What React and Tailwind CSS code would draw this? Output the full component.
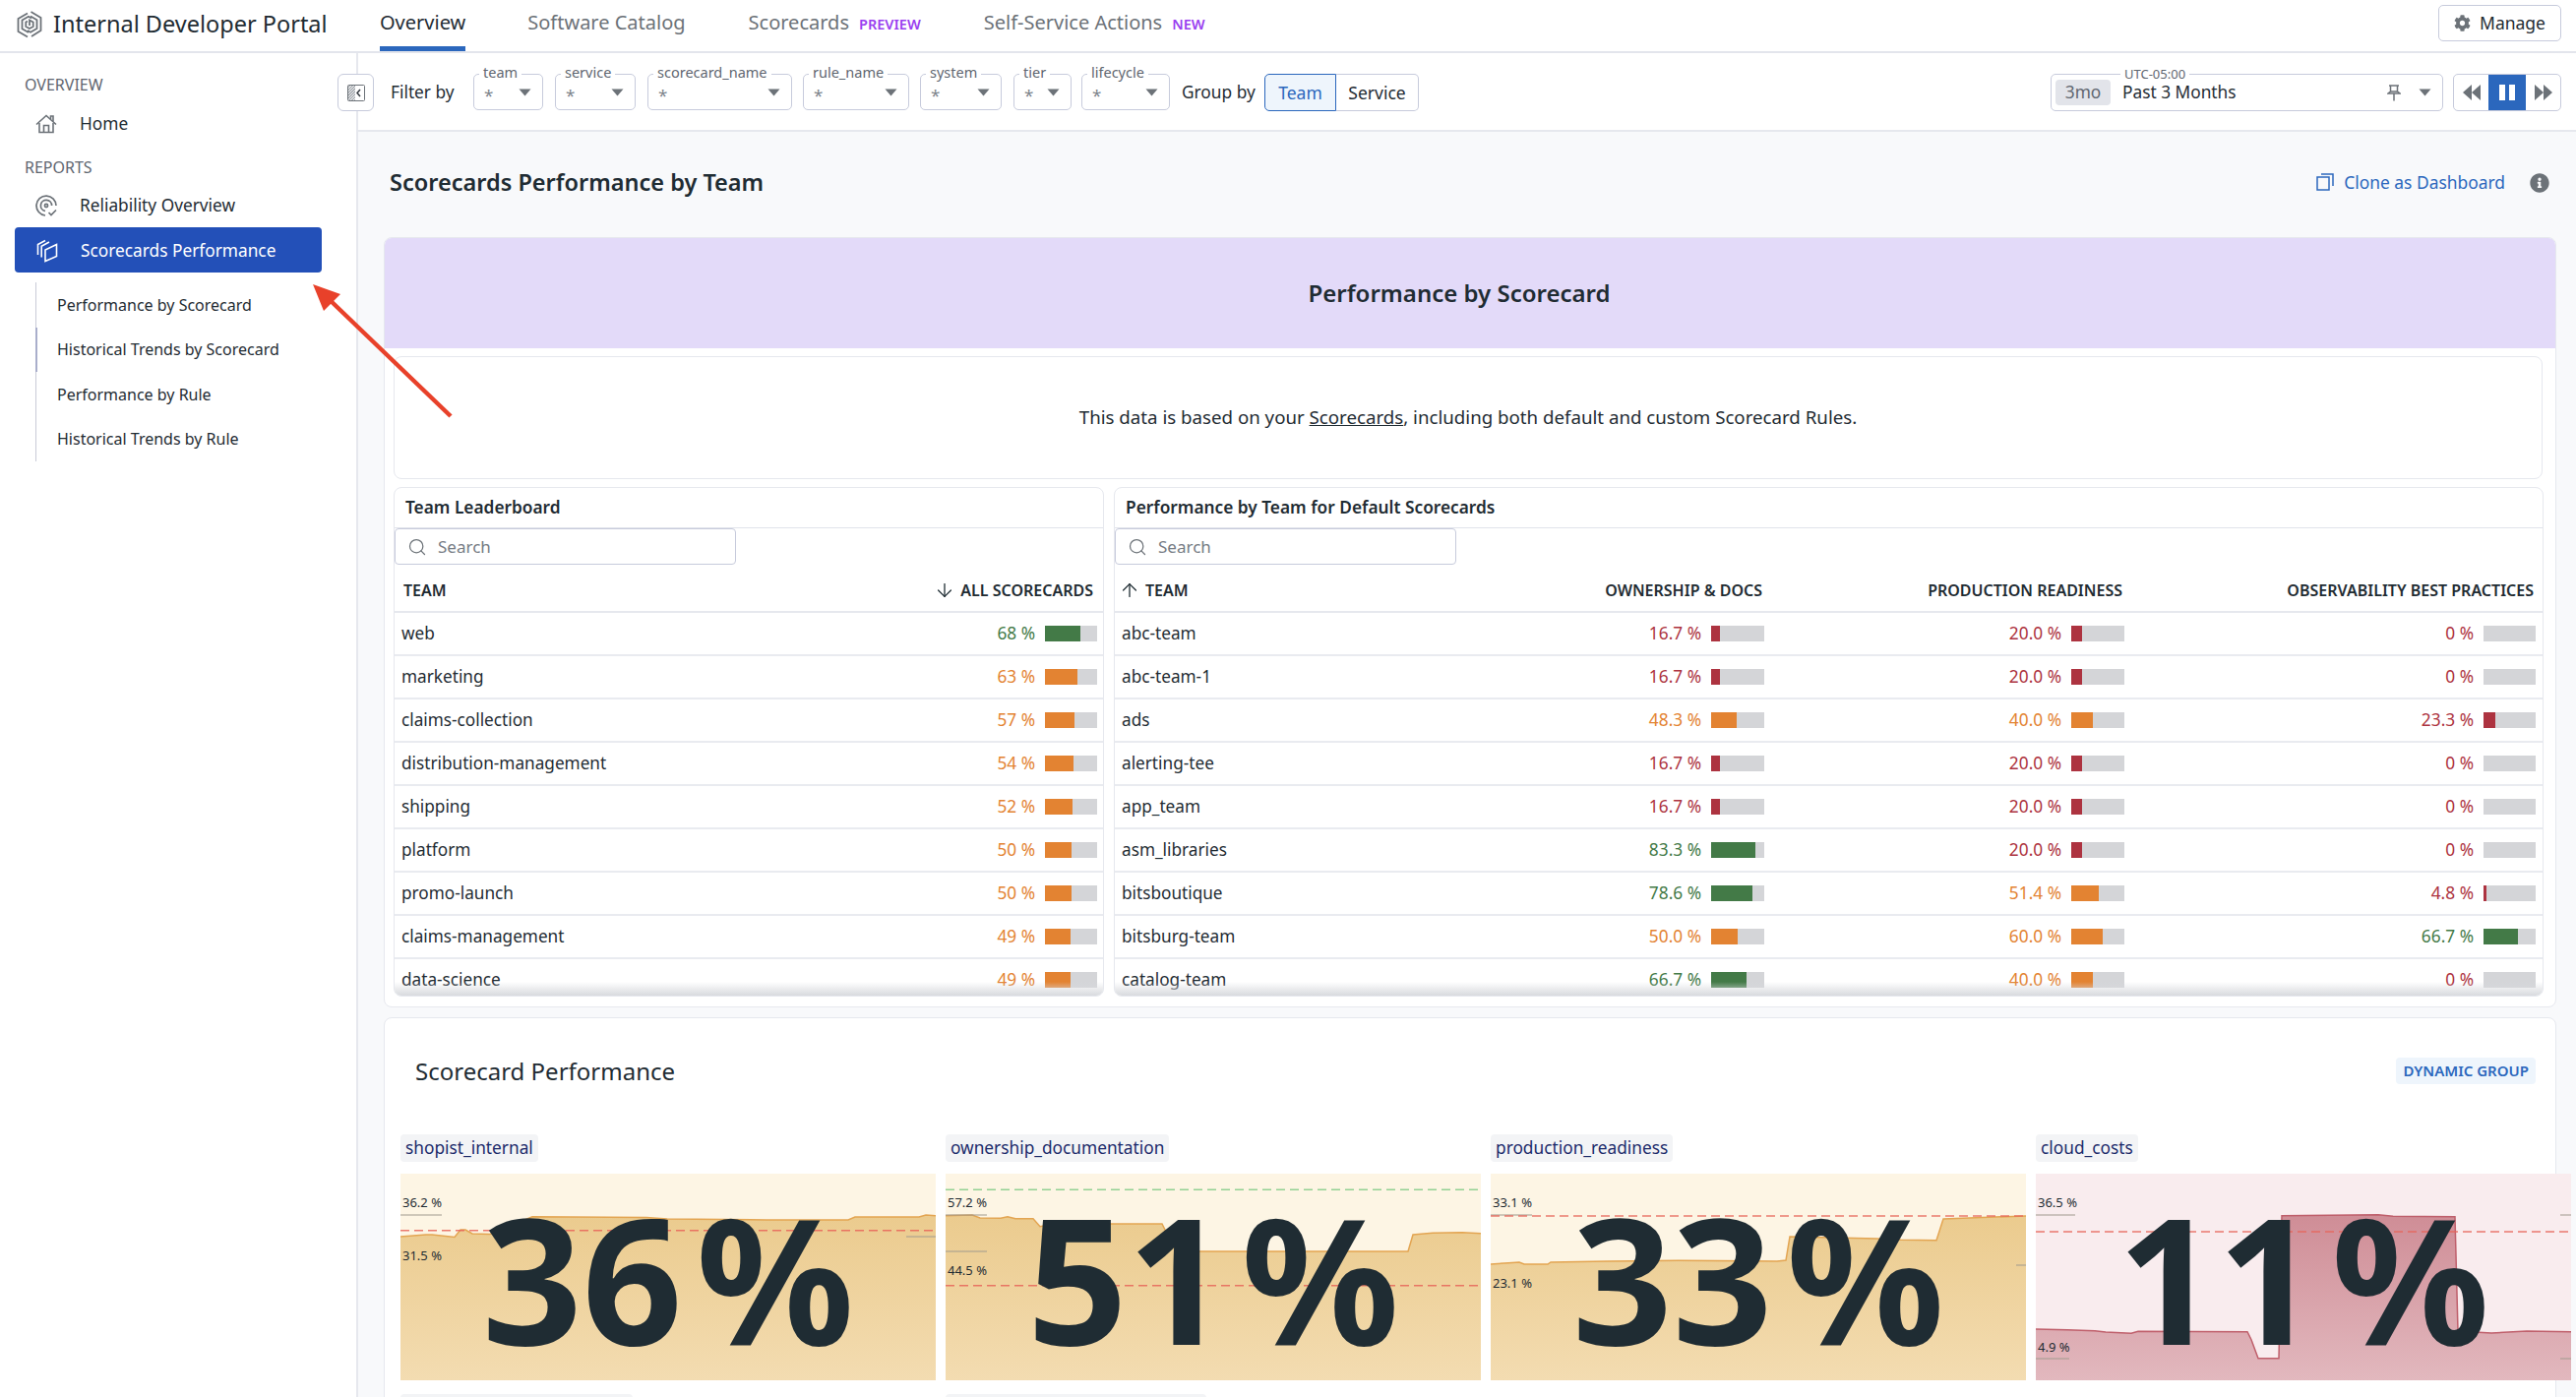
import React from "react";
import { FaCog, FaInfoCircle } from "react-icons/fa";
import { Search, ArrowDown, ArrowUp } from "lucide-react";

const Caret = ({ className = "" }) => (
  <svg width="13" height="8" viewBox="0 0 13 8" className={className}><path d="M0.5 0.5H12.5L6.5 7.5Z" fill="#6c7278" /></svg>
);

const Logo = () => (
  <svg width="26" height="28" viewBox="0 0 26 28" fill="none" stroke="#6c7278" strokeWidth="1.8">
    <path d="M14.5 1 L24.5 7 V20 L15 26" />
    <path d="M11 26.5 L1.5 21 V8 L11 2.5" />
    <path d="M14 5.5 L20.5 9.2 V18 L14 21.7 L11 20" />
    <path d="M12 22 L5.5 18.3 V9.5 L12 5.8 L15 7.5" />
    <path d="M11 10.5 L9.3 11.5 V16 L13 18 L16.7 16 V11.5 L13 9.5 V15" />
  </svg>
);
const HomeIcon = () => (
  <svg width="22" height="20" viewBox="0 0 22 20" fill="none" stroke="#6c7278" strokeWidth="1.6">
    <path d="M1 10.5 L11 1.5 L21 10.5" />
    <path d="M15.5 5 V2 H18 V7.5" />
    <path d="M4 9 V18.5 H18 V9" />
    <path d="M8.5 18.5 V11.5 H13.5 V18.5" />
  </svg>
);
const RelIcon = () => (
  <svg width="23" height="23" viewBox="0 0 23 23" fill="none" stroke="#6c7278" strokeWidth="1.7">
    <path d="M10 21 A10 10 0 1 1 21 11" />
    <path d="M10 16.5 A5.6 5.6 0 1 1 16.6 11" />
    <circle cx="11" cy="11" r="1.6" />
    <path d="M13.5 18 L16 20.5 L21 15.5" />
  </svg>
);
const CardsIcon = () => (
  <svg width="22" height="24" viewBox="0 0 22 24" fill="none" stroke="#ffffff" strokeWidth="1.6">
    <path d="M9 1.5 L1.5 5.5 V16" />
    <path d="M13 3 L5.2 7.2 V18.5" />
    <path d="M20.5 5.5 L9 11 V22.5 L20.5 17.5 Z" />
  </svg>
);
const Collapse = () => (
  <svg width="18" height="17" viewBox="0 0 18 17" fill="none">
    <defs>
      <pattern id="hatch" width="2" height="2" patternUnits="userSpaceOnUse" patternTransform="rotate(45)">
        <rect width="1" height="2" fill="#8a9097" />
      </pattern>
    </defs>
    <rect x="0.5" y="0.5" width="17" height="16" rx="1" fill="#fff" stroke="#6c7278" />
    <rect x="1" y="1" width="7" height="15" fill="url(#hatch)" />
    <path d="M13 5 L10 8.5 L13 12" stroke="#343a40" strokeWidth="1.5" />
  </svg>
);
const Pin = () => (
  <svg width="14" height="17" viewBox="0 0 14 17" fill="none" stroke="#6c7278" strokeWidth="1.5">
    <path d="M2 1 H12 M3.5 1 V7 M10.5 1 V7 M1 9 L3.5 7 H10.5 L13 9 H1 Z M7 9 V16.5" />
  </svg>
);
const Clone = () => (
  <svg width="18" height="18" viewBox="0 0 18 18" fill="none" stroke="#2b67bd" strokeWidth="1.5">
    <rect x="1" y="4" width="12" height="13" />
    <path d="M5 1 H17 V13" />
  </svg>
);

const filters = [
  ["team", "w-[71px]", "mr-[12px]"],
  ["service", "w-[82px]", "mr-[12px]"],
  ["scorecard_name", "w-[147px]", "mr-[11px]"],
  ["rule_name", "w-[108px]", "mr-[11px]"],
  ["system", "w-[83px]", "mr-[12px]"],
  ["tier", "w-[59px]", "mr-[10px]"],
  ["lifecycle", "w-[90px]", "mr-[12px]"],
];

const Filter = ({ name, w, mr }) => (
  <div className={`relative h-[37px] ${w} ${mr} rounded-[5px] border border-[#c7cbdc] bg-white flex items-center justify-between pl-[10px] pr-[11px]`}>
    <span className="absolute left-[5px] top-[-12px] bg-white px-[4px] text-[14.5px] leading-[18px] text-[#5f6670]">{name}</span>
    <span className="text-[17px] leading-[17px] text-[#7d838a] pt-[5px]">*</span>
    <Caret />
  </div>
);

const leaders = [
  ["web", 68], ["marketing", 63], ["claims-collection", 57], ["distribution-management", 54], ["shipping", 52],
  ["platform", 50], ["promo-launch", 50], ["claims-management", 49], ["data-science", 49],
];
const rows = [
  ["abc-team", 16.7, 20, 0], ["abc-team-1", 16.7, 20, 0], ["ads", 48.3, 40, 23.3], ["alerting-tee", 16.7, 20, 0],
  ["app_team", 16.7, 20, 0], ["asm_libraries", 83.3, 20, 0], ["bitsboutique", 78.6, 51.4, 4.8],
  ["bitsburg-team", 50, 60, 66.7], ["catalog-team", 66.7, 40, 0],
];
const tone = (v) => (v >= 66 ? ["text-[#437a47]", "bg-[#437a47]"] : v >= 40 ? ["text-[#e38332]", "bg-[#e38332]"] : ["text-[#ad3340]", "bg-[#ad3340]"]);

const Score = ({ v, label, w = "w-[53px]", gap = "gap-[10px]" }) => {
  const [t, b] = tone(v);
  return (
    <div className={`flex items-center justify-end ${gap}`}>
      <span className={`text-[17.3px] ${t}`}>{label}</span>
      <div className={`h-[16px] ${w} bg-[#d4d5d8] shrink-0`}>
        <div className={`h-full ${b}`} style={{ width: `${v}%` }} />
      </div>
    </div>
  );
};

const SearchBox = () => (
  <div className="h-[37px] w-[347px] rounded-[4px] border border-[#c7cbdc] bg-white flex items-center gap-[11px] pl-[12px]">
    <Search size={20} strokeWidth={1.5} color="#6c7278" />
    <span className="text-[17px] text-[#767c84]">Search</span>
  </div>
);

const Fade = () => (
  <div className="absolute inset-x-0 bottom-0 h-[14px] bg-gradient-to-b from-transparent to-[#d8dade]" />
);

const LeftPanel = () => (
  <div className="relative h-[518px] w-[722px] shrink-0 rounded-[8px] border border-[#e6e8ee] bg-white overflow-hidden">
    <div className="h-[41px] border-b border-[#e1e3ea] flex items-center pl-[11px] text-[17.3px] font-semibold text-[#1f2c33]">Team Leaderboard</div>
    <SearchBox />
    <div className="h-[49px] pt-[5px] border-b-2 border-[#e6e8ee] flex items-center justify-between pl-[9px] pr-[10px] text-[16px] font-semibold uppercase text-[#1f2c33]">
      <span>Team</span>
      <span className="flex items-center gap-[5px]"><ArrowDown size={22} strokeWidth={1.4} />All Scorecards</span>
    </div>
    {leaders.map(([n, v]) => (
      <div key={n} className="h-[44px] border-b-2 border-[#e9ebf0] flex items-center justify-between pl-[7px] pr-[6px]">
        <span className="text-[17.2px] text-[#1f2c33]">{n}</span>
        <Score v={v} label={`${v} %`} />
      </div>
    ))}
    <Fade />
  </div>
);

const RightPanel = () => (
  <div className="relative h-[518px] w-[1453px] shrink-0 rounded-[8px] border border-[#e6e8ee] bg-white overflow-hidden">
    <div className="h-[41px] border-b border-[#e1e3ea] flex items-center pl-[11px] text-[17.3px] font-semibold text-[#1f2c33]">Performance by Team for Default Scorecards</div>
    <SearchBox />
    <div className="h-[49px] pt-[5px] border-b-2 border-[#e6e8ee] grid grid-cols-[300px_366px_366px_419px] items-center text-[16px] font-semibold uppercase text-[#1f2c33]">
      <span className="flex items-center gap-[5px] pl-[4px]"><ArrowUp size={22} strokeWidth={1.4} />Team</span>
      <span className="text-right pr-[8px]">Ownership &amp; Docs</span>
      <span className="text-right pr-[8px]">Production Readiness</span>
      <span className="text-right pr-[9px]">Observability Best Practices</span>
    </div>
    {rows.map(([n, a, b, c]) => (
      <div key={n} className="h-[44px] border-b-2 border-[#e9ebf0] grid grid-cols-[300px_366px_366px_419px] items-center">
        <span className="text-[17.2px] text-[#1f2c33] pl-[7px]">{n}</span>
        <div className="pr-[6px]"><Score v={a} label={`${a.toFixed(1)} %`} w="w-[54px]" /></div>
        <div className="pr-[6px]"><Score v={b} label={`${b.toFixed(1)} %`} w="w-[54px]" /></div>
        <div className="pr-[7px]"><Score v={c} label={c === 0 ? "0 %" : `${c.toFixed(1)} %`} /></div>
      </div>
    ))}
    <Fade />
  </div>
);

const pts = (arr) => arr.map((p) => p.join(",")).join(" ");

const Chart = ({ id, value, line, labels, ticks, red, green, pink }) => {
  const bg = pink ? "bg-[#f9ecee]" : "bg-[#fdf5e4]";
  const stroke = pink ? "#bf5f6b" : "#e3a552";
  const top = pink ? "#cf8d96" : "#ebcb8e";
  const bot = pink ? "#e2b8be" : "#f3dcb1";
  const start = line[0];
  const end = line[line.length - 1];
  return (
    <div className={`relative h-[210px] w-[544px] ${bg}`}>
      <svg width="544" height="210" viewBox="0 0 544 210" className="absolute inset-0">
        <defs>
          <linearGradient id={id} x1="0" y1="0" x2="0" y2="1">
            <stop offset="0%" stopColor={top} />
            <stop offset="100%" stopColor={bot} />
          </linearGradient>
        </defs>
        <polygon points={`${start[0]},210 ${pts(line)} ${end[0]},210`} fill={`url(#${id})`} />
        <polyline points={pts(line)} fill="none" stroke={stroke} strokeWidth="1.5" />
        {ticks.map(([x1, x2, y], i) => (
          <line key={i} x1={x1} x2={x2} y1={y} y2={y} stroke="#a09a8e" strokeWidth="1" />
        ))}
        {red != null && <line x1="0" x2="544" y1={red} y2={red} stroke="#e8655a" strokeWidth="1.5" strokeDasharray="9 5" opacity="0.85" />}
        {green != null && <line x1="0" x2="544" y1={green} y2={green} stroke="#93d193" strokeWidth="1.5" strokeDasharray="9 5" />}
      </svg>
      {labels.map(([t, y]) => (
        <span key={t} className="absolute left-[2px] text-[13px] leading-[14px] text-[#1f2c33]" style={{ top: y - 7 }}>{t}</span>
      ))}
      <div className="absolute inset-0 flex items-center justify-center font-bold text-[178px] leading-[200px] text-[#1f2c33]">
        <span>{value}</span><span className="ml-[14px]">%</span>
      </div>
    </div>
  );
};

const charts = [
  {
    tag: "shopist_internal", value: "36", red: 57.7,
    labels: [["36.2 %", 29], ["31.5 %", 83]],
    ticks: [[0, 42, 42], [514, 544, 64]],
    line: [[0, 64], [26, 62], [32, 62], [55, 64.5], [61, 57], [66, 57], [73, 61], [91, 61.5], [134, 43.7], [250, 44.5], [271, 46], [372, 47], [455, 47], [462, 44], [527, 44], [534, 42], [544, 42.7]],
  },
  {
    tag: "ownership_documentation", value: "51", red: 113.7, green: 16.3,
    labels: [["57.2 %", 29], ["44.5 %", 98]],
    ticks: [[0, 42, 42], [0, 42, 79]],
    line: [[0, 42.7], [27, 42], [35, 45], [56, 45.3], [63, 43.7], [71, 45.7], [89, 45.7], [96, 53.7], [110, 51], [220, 51], [234, 79], [470, 79], [475, 62], [495, 60.3], [525, 59.7], [544, 60.7]],
  },
  {
    tag: "production_readiness", value: "33", red: 43,
    labels: [["33.1 %", 29], ["23.1 %", 111]],
    ticks: [[0, 42, 42], [534, 544, 93]],
    line: [[0, 92], [18, 90.7], [29, 90], [34, 92], [58, 92], [61, 90], [119, 89], [191, 88.3], [291, 89], [300, 88], [304, 64], [392, 66], [417, 67.3], [453, 67.7], [460, 46], [493, 44.7], [544, 43]],
  },
  {
    tag: "cloud_costs", value: "11", red: 59, pink: true,
    labels: [["36.5 %", 29], ["4.9 %", 176]],
    ticks: [[0, 40, 42], [0, 34, 188], [533, 544, 42], [533, 544, 188]],
    line: [[0, 158], [32, 158.7], [60, 159.7], [71, 161], [97, 162.3], [104, 160.3], [215, 160.7], [219, 168.7], [226, 187.7], [247, 187.7], [250, 42.7], [348, 41.7], [363, 43.3], [426, 43.7], [429, 160], [463, 162], [499, 160], [544, 160.7]],
  },
];

const Tag = ({ children, w = "" }) => (
  <div className={`h-[28px] self-start inline-flex items-center px-[5px] rounded-[4px] bg-[#f3f4f6] text-[17.3px] text-[#1c2b6b] ${w}`}>{children}</div>
);

export default function App() {
  return (
    <div className="relative h-[1420px] w-[2618px] overflow-hidden bg-white" style={{ fontFamily: '"Noto Sans", sans-serif' }}>
      <header className="h-[54px] border-b-2 border-[#e3e5ec] flex items-center relative">
        <div className="ml-[17px] mr-[11px] flex pb-[2px]"><Logo /></div>
        <span className="text-[23.5px] leading-[30px] text-[#1f2c33] w-[332px] pb-[5px]">Internal Developer Portal</span>
        <nav className="flex items-stretch h-full">
          <div className="flex items-center h-[52px] border-b-[5px] border-[#2b67bd] text-[20px] text-[#1f2c33] pb-[1px]">Overview</div>
          <div className="ml-[63px] flex items-center text-[20px] text-[#6c7278] pb-[6px]">Software Catalog</div>
          <div className="ml-[64px] flex items-center text-[20px] text-[#6c7278] pb-[6px]">Scorecards<span className="ml-[10px] text-[14.5px] font-semibold text-[#9a3ff0] pt-[3px]">PREVIEW</span></div>
          <div className="ml-[64px] flex items-center text-[20px] text-[#6c7278] pb-[6px]">Self-Service Actions<span className="ml-[10px] text-[14.5px] font-semibold text-[#9a3ff0] pt-[3px]">NEW</span></div>
        </nav>
        <button className="absolute right-[15px] top-[5px] h-[37px] w-[125px] rounded-[5px] border border-[#c7cbdc] bg-white flex items-center justify-center gap-[9px] text-[17.5px] text-[#1f2c33]">
          <FaCog size={17} color="#6c7278" />Manage
        </button>
      </header>

      <div className="flex h-[1366px]">
        <aside className="w-[364px] shrink-0 border-r-2 border-[#e6e8ee] relative">
          <div className="pl-[25px] pt-[22px] text-[16px] leading-[20px] text-[#5f6670]">OVERVIEW</div>
          <div className="h-[46px] mt-[7px] flex items-center pl-[36px] gap-[23px] text-[17.3px] text-[#1f2c33]"><HomeIcon />Home</div>
          <div className="pl-[25px] mt-[11px] text-[16px] leading-[20px] text-[#5f6670]">REPORTS</div>
          <div className="h-[46px] mt-[5px] pt-[2px] flex items-center pl-[36px] gap-[22px] text-[17.3px] text-[#1f2c33]"><RelIcon />Reliability Overview</div>
          <div className="h-[46px] ml-[15px] w-[312px] pt-[1px] rounded-[4px] bg-[#2350b8] flex items-center pl-[22px] gap-[23px] text-[17.3px] text-white"><CardsIcon />Scorecards Performance</div>
          <div className="ml-[36px] mt-[10px] flex flex-col">
            {["Performance by Scorecard", "Historical Trends by Scorecard", "Performance by Rule", "Historical Trends by Rule"].map((t, i) => (
              <div key={t} className={`h-[45.5px] flex items-center text-[16px] text-[#1f2c33] ${i === 1 ? "pl-[20px] border-l-[2px] border-[#a9aecb]" : "pl-[21px] border-l border-[#c9ccd8]"}`}>{t}</div>
            ))}
          </div>
        </aside>

        <main className="flex-1 bg-[#f8f9fb] min-w-0">
          <div className="h-[80px] bg-white border-b-2 border-[#e6e8ee] flex items-start pt-[21px] relative">
            <button className="ml-[-21px] mr-[17px] h-[38px] w-[37px] rounded-[6px] border border-[#c7cbdc] bg-white flex items-center justify-center z-10"><Collapse /></button>
            <span className="w-[84px] text-[17.3px] leading-[37px] text-[#1f2c33]">Filter by</span>
            {filters.map(([n, w, m]) => <Filter key={n} name={n} w={w} mr={m} />)}
            <span className="w-[84px] text-[17.3px] leading-[37px] text-[#1f2c33]">Group by</span>
            <div className="h-[38px] w-[73px] rounded-l-[5px] border border-[#2b67bd] bg-[#eef5fc] text-[#2b67bd] text-[17.5px] flex items-center justify-center">Team</div>
            <div className="h-[38px] w-[84px] rounded-r-[5px] border border-l-0 border-[#c7cbdc] text-[#1f2c33] text-[17.5px] flex items-center justify-center">Service</div>
            <div className="ml-auto flex mr-[15px]">
              <div className="relative h-[38px] w-[399px] rounded-[5px] border border-[#c7cbdc] flex items-center pl-[4px] pr-[11px]">
                <span className="absolute left-[70px] top-[-10px] bg-white px-[4px] text-[13px] leading-[18px] text-[#5f6670]">UTC-05:00</span>
                <span className="h-[26px] w-[56px] rounded-[4px] bg-[#e2e4ea] flex items-center justify-center text-[17.3px] text-[#5f6670]">3mo</span>
                <span className="ml-[12px] text-[17.3px] text-[#1f2c33]">Past 3 Months</span>
                <span className="ml-auto mr-[18px] flex"><Pin /></span>
                <Caret />
              </div>
              <div className="ml-[10px] h-[38px] w-[110px] rounded-[5px] border border-[#c7cbdc] flex items-stretch overflow-hidden">
                <div className="w-[35px] flex items-center justify-center">
                  <svg width="18" height="16" viewBox="0 0 18 16" fill="#6c7278"><path d="M9 0V16L0 8ZM18 0V16L9 8Z" /></svg>
                </div>
                <div className="w-[38px] bg-[#2b67bd] flex items-center justify-center gap-[4px]">
                  <div className="h-[16px] w-[6px] bg-white" /><div className="h-[16px] w-[6px] bg-white" />
                </div>
                <div className="flex-1 flex items-center justify-center">
                  <svg width="18" height="16" viewBox="0 0 18 16" fill="#6c7278"><path d="M0 0V16L9 8ZM9 0V16L18 8Z" /></svg>
                </div>
              </div>
            </div>
          </div>

          <div className="pl-[26px] pr-[20px]">
            <div className="h-[107px] flex items-center pl-[6px] pr-[7px] pb-[4px]">
              <h1 className="text-[23.5px] font-semibold text-[#1f2c33]">Scorecards Performance by Team</h1>
              <div className="ml-auto flex items-center gap-[10px] text-[17.4px] text-[#2b67bd]"><Clone />Clone as Dashboard</div>
              <FaInfoCircle className="ml-[25px]" size={20} color="#6c7278" />
            </div>

            <section className="h-[783px] rounded-[8px] border border-[#e6e8ee] bg-white overflow-hidden">
              <div className="h-[112px] bg-[#e3daf9] flex items-center justify-center pr-[22px] text-[24px] font-semibold text-[#1f2c33]">Performance by Scorecard</div>
              <div className="pl-[9px] pr-[13px]">
                <div className="mt-[8px] h-[125px] rounded-[8px] border border-[#e6e8ee] flex items-center justify-center text-[18.7px] text-[#1f2c33]">
                  <span>This data is based on your <span className="underline">Scorecards</span>, including both default and custom Scorecard Rules.</span>
                </div>
                <div className="mt-[8px] flex gap-[10px]">
                  <LeftPanel />
                  <RightPanel />
                </div>
              </div>
            </section>

            <section className="mt-[10px] h-[500px] rounded-t-[8px] border border-[#e6e8ee] bg-white pl-[16px]">
              <div className="h-[118px] flex items-center justify-between pr-[20px] pb-[11px]">
                <h2 className="pl-[15px] text-[24px] text-[#1f2c33]">Scorecard Performance</h2>
                <span className="h-[27px] px-[7px] rounded-[4px] bg-[#eef5fc] flex items-center text-[15px] font-semibold text-[#2b67bd]">DYNAMIC GROUP</span>
              </div>
              <div className="grid grid-cols-[repeat(4,544px)] gap-x-[10px] gap-y-[14px]">
                {charts.map((c) => (
                  <div key={c.tag} className="flex flex-col gap-[12px]">
                    <Tag>{c.tag}</Tag>
                    <Chart id={`g-${c.tag}`} {...c} />
                  </div>
                ))}
                <Tag w="w-[236px]" />
                <Tag w="w-[265px]" />
              </div>
            </section>
          </div>
        </main>
      </div>

      <svg className="absolute left-[310px] top-[280px] pointer-events-none" width="160" height="150" viewBox="0 0 160 150">
        <line x1="148" y1="143" x2="20" y2="20" stroke="#e8412a" strokeWidth="4.5" />
        <path d="M8 9 L36 19 L19 36 Z" fill="#e8412a" />
      </svg>
    </div>
  );
}
